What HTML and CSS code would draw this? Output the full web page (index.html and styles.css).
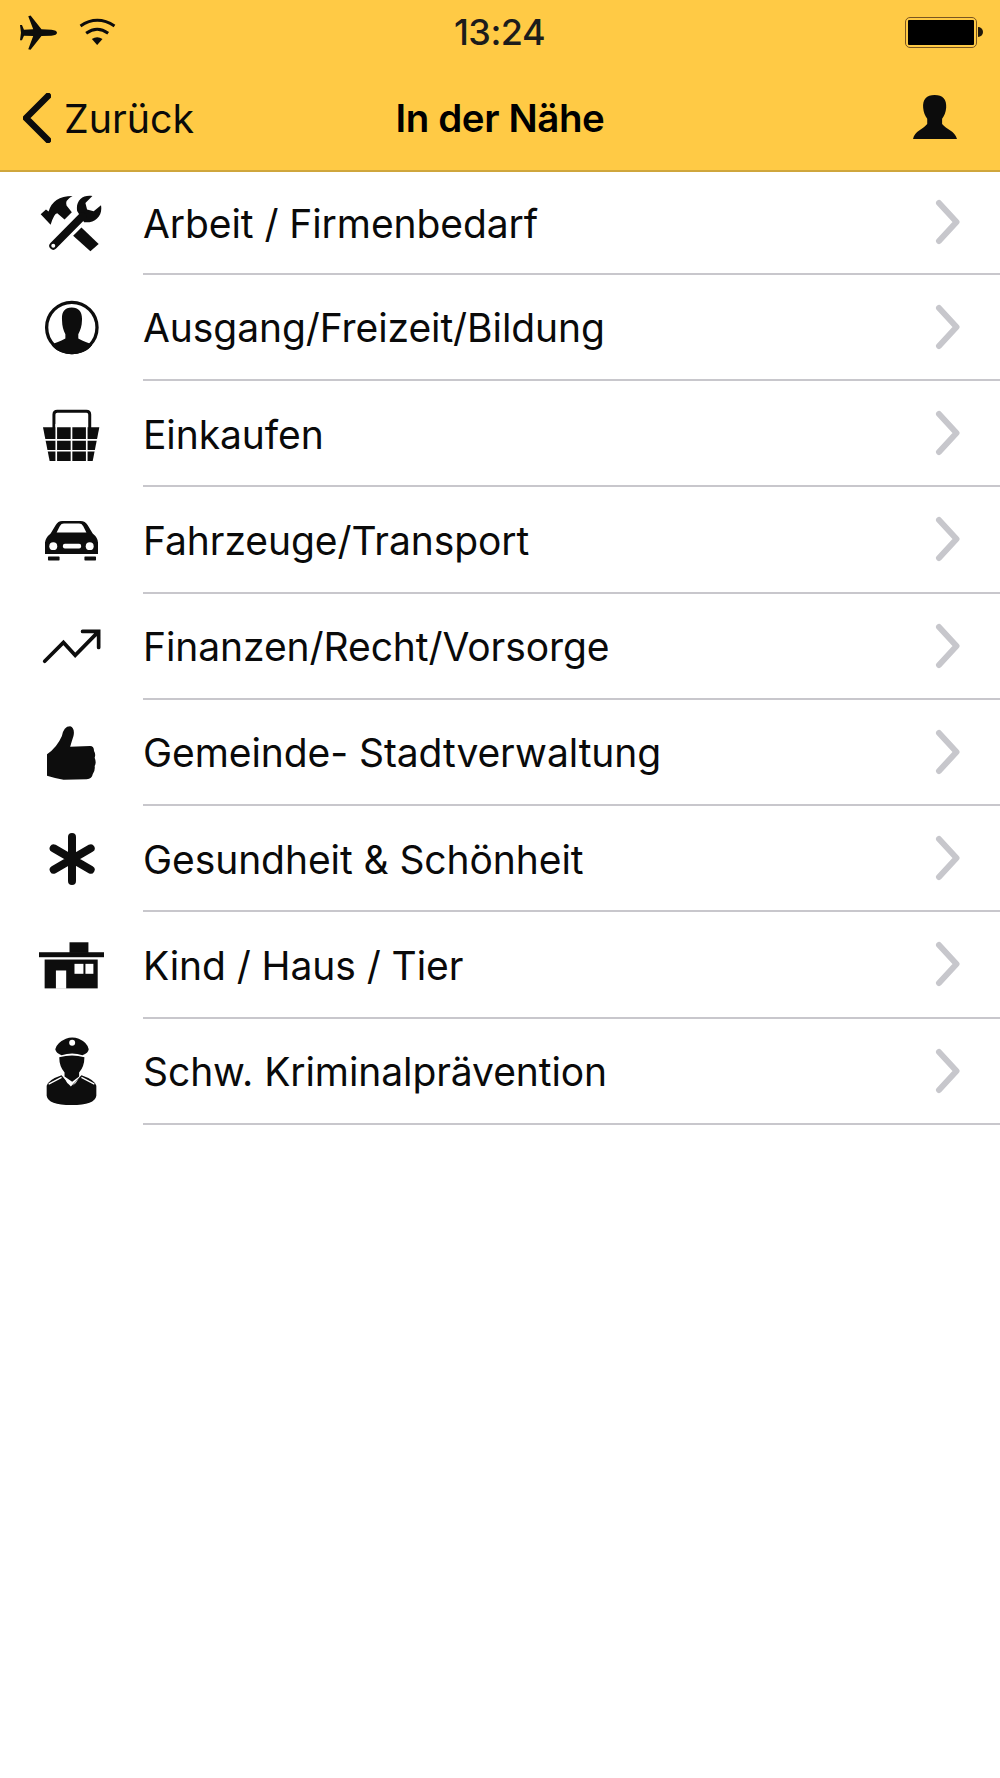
FILE: index.html
```html
<!DOCTYPE html>
<html lang="de">
<head>
<meta charset="utf-8">
<title>In der Nähe</title>
<link rel="stylesheet" href="styles.css">
</head>
<body>
<header class="top">
  <div class="status">
    <div class="status-left">
      <svg class="plane" viewBox="60 42 112 105"><path d="M172 95Q172 88 155 86L125 85L92 43L85 45L100 85L72 86L66 72L60 72L63 95L60 118L66 118L72 104L100 105L85 145L92 147L125 105L155 104Q172 102 172 95Z"/></svg>
      <svg class="wifi" viewBox="238 52 110 81"><path class="wifi-arc" d="M242 76Q292 42 344 76M259 98Q292 74 325 98"/><path d="M276 115Q292 105 308 115L292 133Z"/></svg>
    </div>
    <span class="time">13:24</span>
    <div class="status-right">
      <div class="battery"><div class="battery-fill"></div></div>
      <div class="battery-tip"></div>
    </div>
  </div>
  <nav class="nav">
    <a class="back">
      <svg class="back-icon" viewBox="0 0 28 50"><path d="M25 3L3 25L25 47"/></svg>
      <span>Zurück</span>
    </a>
    <h1 class="title">In der Nähe</h1>
    <div class="nav-right">
      <svg class="profile" viewBox="1240 290 130 130"><path d="M1304 290C1280 290 1268 303 1270 328C1271 342 1276 352 1282 360L1282 376C1270 392 1245 396 1240 420L1370 420C1364 396 1338 392 1326 376L1326 360C1332 352 1337 342 1338 328C1340 303 1328 290 1304 290Z"/></svg>
    </div>
  </nav>
</header>
<main>
  <ul class="list">
    <li class="row row-first">
      <div class="ic"><svg class="i-tools" viewBox="60 42 190 172">
        <path d="M62 100L78 86L86 92Q98 46 158 45Q134 58 140 74L156 94L134 116L112 97Q102 98 92 132Z"/>
        <path d="M185 140L237 190L212 212L160 165Z"/>
        <path d="M172 90C167 58 190 40 218 45L197 66L202 86L222 91L244 73C250 105 225 128 193 124Z"/>
        <path class="wrench" d="M100 195L188 106"/>
        <circle class="hole" cx="100" cy="195" r="6"/>
      </svg></div>
      <span class="label">Arbeit / Firmenbedarf</span>
      <svg class="chev" viewBox="0 0 28 46"><path d="M4 4L21.500 23L4 42"/></svg>
    </li>
    <li class="row">
      <div class="ic"><svg class="i-person" viewBox="73 362 162 166">
        <circle class="ring" cx="153.500" cy="445" r="76"/>
        <path d="M153 385C130 385 122 400 124 425C124 440 128 455 134 465L134 478C118 488 104 490 92 497C118 535 190 535 215 497C203 490 189 488 173 478L173 465C179 455 184 440 184 425C186 400 176 385 153 385Z"/>
      </svg></div>
      <span class="label">Ausgang/Freizeit/Bildung</span>
      <svg class="chev" viewBox="0 0 28 46"><path d="M4 4L21.500 23L4 42"/></svg>
    </li>
    <li class="row">
      <div class="ic"><svg class="i-basket" viewBox="68 686 172 158">
        <path class="handle" d="M101 745L101 702Q101 692 111 692L199 692Q209 692 209 702L209 745"/>
        <path d="M68 740L238 740L218 842L88 842Z"/>
        <path class="grid" d="M60 778L250 778M60 811L250 811M108 730L108 850M154 730L154 850M200 730L200 850"/>
      </svg></div>
      <span class="label">Einkaufen</span>
      <svg class="chev" viewBox="0 0 28 46"><path d="M4 4L21.500 23L4 42"/></svg>
    </li>
    <li class="row">
      <div class="ic"><svg class="i-car" viewBox="73 63 160 122">
        <path d="M73 165L73 130Q75 115 90 103L105 78Q112 65 125 65L180 65Q195 65 202 78L217 103Q232 115 233 130L233 165Z"/>
        <path class="cut" d="M108 100L118 80Q122 73 130 73L176 73Q184 73 188 80L198 100Z"/>
        <circle class="cut" cx="98" cy="141" r="12"/><circle class="cut" cx="208" cy="141" r="12"/>
        <rect class="cut" x="127" y="134" width="55" height="14" rx="6"/>
        <rect x="82" y="172" width="35" height="12" rx="2"/><rect x="192" y="172" width="35" height="12" rx="2"/>
      </svg></div>
      <span class="label">Fahrzeuge/Transport</span>
      <svg class="chev" viewBox="0 0 28 46"><path d="M4 4L21.500 23L4 42"/></svg>
    </li>
    <li class="row">
      <div class="ic"><svg class="i-trend" viewBox="66 390 176 104">
        <path class="trend" d="M74 486L130 430L165 468L230 402M187 397L235 397L235 445"/>
      </svg></div>
      <span class="label">Finanzen/Recht/Vorsorge</span>
      <svg class="chev" viewBox="0 0 28 46"><path d="M4 4L21.500 23L4 42"/></svg>
    </li>
    <li class="row">
      <div class="ic"><svg class="i-thumb" viewBox="80 680 148 162">
        <path d="M80 765Q110 745 125 710Q130 680 150 680Q165 685 160 710Q155 725 150 742L210 740Q222 740 222 755Q228 765 224 775Q230 790 224 800Q226 815 218 825Q216 838 200 840L130 842Q105 838 80 830Z"/>
      </svg></div>
      <span class="label">Gemeinde- Stadtverwaltung</span>
      <svg class="chev" viewBox="0 0 28 46"><path d="M4 4L21.500 23L4 42"/></svg>
    </li>
    <li class="row">
      <div class="ic"><svg class="i-star" viewBox="84 12 138 156">
        <path class="star" d="M153 24L153 156M98 58L209 122M209 58L98 122"/>
      </svg></div>
      <span class="label">Gesundheit &amp; Schönheit</span>
      <svg class="chev" viewBox="0 0 28 46"><path d="M4 4L21.500 23L4 42"/></svg>
    </li>
    <li class="row">
      <div class="ic"><svg class="i-house" viewBox="56 340 196 140">
        <rect x="56" y="370" width="196" height="15"/>
        <rect x="148" y="340" width="57" height="32"/>
        <rect x="73" y="392" width="160" height="87"/>
        <rect class="cut" x="107" y="425" width="31" height="55"/>
        <rect class="cut" x="163" y="405" width="27" height="30"/>
        <rect class="cut" x="196" y="405" width="24" height="30"/>
      </svg></div>
      <span class="label">Kind / Haus / Tier</span>
      <svg class="chev" viewBox="0 0 28 46"><path d="M4 4L21.500 23L4 42"/></svg>
    </li>
    <li class="row">
      <div class="ic"><svg class="i-police" viewBox="78 624 154 206">
        <path d="M106 660Q110 640 138 628Q157 621 177 628Q204 640 207 660Q206 672 188 678Q157 667 125 678Q108 672 106 660Z"/>
        <circle class="cut" cx="157" cy="640" r="9"/>
        <path d="M118 684Q157 674 194 684Q194 712 178 730L178 742L157 758L134 742L134 730Q118 712 118 684Z"/>
        <path d="M80 770Q84 752 125 738L153 772L185 738Q226 752 230 770L230 800Q226 828 155 828Q84 828 80 800Z"/>
        <path class="stripe" d="M86 765L125 745M224 765L185 745"/>
        <path class="cut" d="M134 746L152 770L142 762ZM178 746L158 770L168 762Z"/>
      </svg></div>
      <span class="label">Schw. Kriminalprävention</span>
      <svg class="chev" viewBox="0 0 28 46"><path d="M4 4L21.500 23L4 42"/></svg>
    </li>
  </ul>
</main>
</body>
</html>
```
FILE: styles.css
```css
* { box-sizing: border-box; }
html, body { margin: 0; padding: 0; background: #fff; }
body { font-family: Inter, "Liberation Sans", sans-serif; color: #0a0a0a; width: 1000px; height: 1778px; overflow: hidden; }

.top { height: 172px; background: #ffca45; border-bottom: 2px solid #cfa63c; display: flex; flex-direction: column; }
.status { height: 62px; display: grid; grid-template-columns: 1fr auto 1fr; align-items: center; padding: 2px 17px 0 20px; }
.status-left { display: flex; align-items: center; }
.status-right { display: flex; align-items: center; justify-content: flex-end; }
.plane { width: 37px; height: 35px; fill: #0c0c0c; margin-top: 1px; }
.wifi { width: 37px; height: 27px; margin-left: 22px; margin-top: -2px; fill: #0c0c0c; }
.wifi-arc { fill: none; stroke: #0c0c0c; stroke-width: 9; }
.time { font-size: 36px; font-weight: 500; color: #1c1c1c; letter-spacing: -0.5px; position: relative; left: -2px; }
.battery { width: 72px; height: 31px; border: 1.500px solid #7a5520; border-radius: 5px; padding: 2px; }
.battery-fill { width: 100%; height: 100%; background: #000; border-radius: 1px; }
.battery-tip { width: 5px; height: 10px; background: #20180a; border-radius: 0 5px 5px 0; margin-left: 1px; }

.nav { flex: 1; display: grid; grid-template-columns: 1fr auto 1fr; align-items: center; padding: 4px 43px 0 23px; }
.back { display: flex; align-items: center; gap: 13px; font-size: 39.300px; }
.back-icon { width: 28px; height: 50px; }
.back-icon path { fill: none; stroke: #0c0c0c; stroke-width: 6.500; stroke-linecap: round; stroke-linejoin: round; }
.title { margin: 0; font-size: 38.500px; font-weight: 600; letter-spacing: -0.4px; color: #000; position: relative; left: 10px; }
.nav-right { display: flex; justify-content: flex-end; }
.profile { width: 44px; height: 44px; fill: #0c0c0c; margin-top: -2px; }

.list { list-style: none; margin: 0; padding: 0; }
.row { height: 106.250px; display: flex; align-items: center; position: relative; padding-right: 37px; }
.row-first { height: 102.800px; }
.row::after { content: ""; position: absolute; left: 143px; right: 0; bottom: 0; height: 2px; background: #c8c7cc; }
.ic { width: 143px; flex: none; display: flex; justify-content: center; }
.ic svg { display: block; fill: #0d0d0d; }
.label { flex: 1; font-size: 39px; letter-spacing: -0.08px; color: #0a0a0a; }
.chev { width: 28px; height: 46px; flex: none; margin-top: -2px; }
.chev path { fill: none; stroke: #c7c7cc; stroke-width: 6; stroke-linecap: round; stroke-linejoin: round; }

.i-tools { width: 63px; height: 57px; }
.wrench { stroke: #0d0d0d; stroke-width: 24; fill: none; stroke-linecap: round; }
.hole { fill: #fff; }
.i-person { width: 54px; height: 55px; }
.ring { fill: none; stroke: #0d0d0d; stroke-width: 10; }
.i-basket { width: 57px; height: 53px; margin-top: 3px; }
.handle { fill: none; stroke: #0d0d0d; stroke-width: 9; }
.grid { fill: none; stroke: #fff; stroke-width: 5; }
.i-car { width: 53px; height: 41px; }
.cut { fill: #fff; }
.i-trend { width: 59px; height: 35px; }
.trend { fill: none; stroke: #0d0d0d; stroke-width: 11; stroke-linecap: round; stroke-linejoin: miter; }
.i-thumb { width: 49px; height: 54px; }
.i-star { width: 46px; height: 52px; }
.star { fill: none; stroke: #0d0d0d; stroke-width: 24; stroke-linecap: round; }
.i-house { width: 65px; height: 47px; }
.i-police { width: 51px; height: 69px; }
.stripe { fill: none; stroke: #fff; stroke-width: 4; }
```
